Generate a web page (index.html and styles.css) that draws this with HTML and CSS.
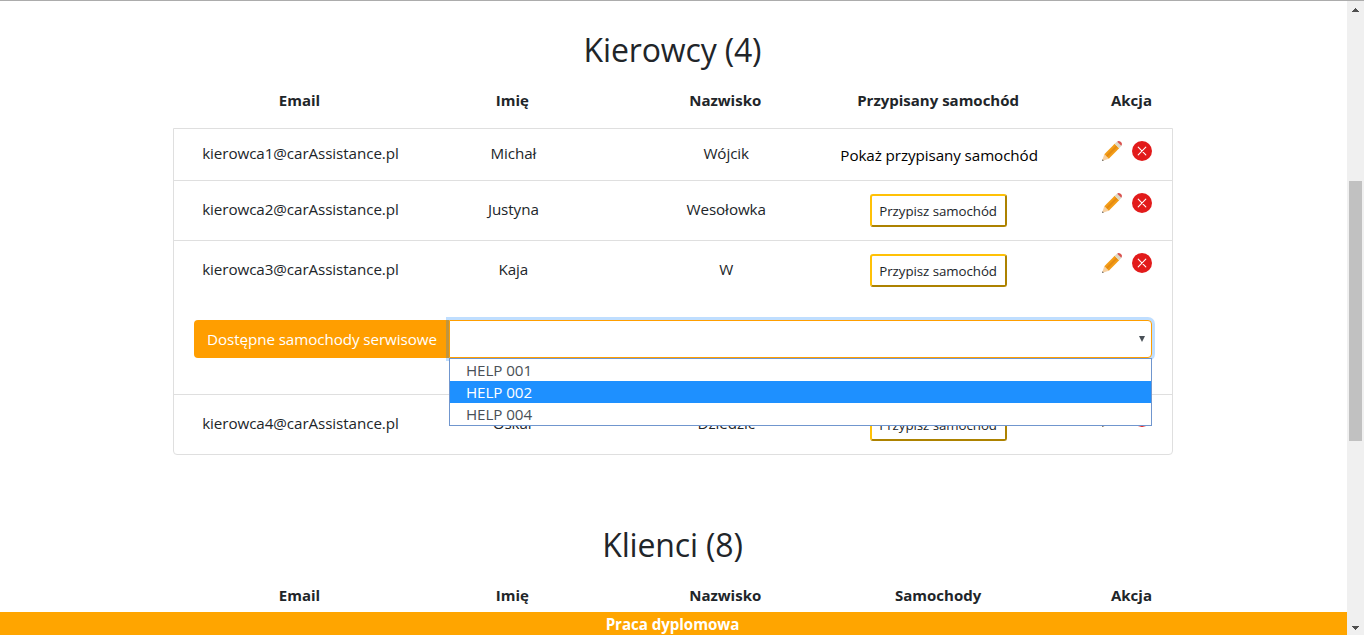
FILE: index.html
```html
<!DOCTYPE html>
<html lang="pl">
<head>
<meta charset="utf-8">
<title>Kierowcy</title>
<link rel="stylesheet" href="styles.css">
</head>
<body>
<svg class="sprite" width="0" height="0">
  <symbol id="pencil" viewBox="0 0 20 20">
    <path fill="#f7d0a0" d="M0 20 2.3 13.2 6.8 17.7z"/>
    <path fill="#555" d="M0 20 .6 18.2 1.8 19.4z"/>
    <path fill="#f39c16" d="M2.3 13.2 12.7 2.8 17.2 7.3 6.8 17.7z"/>
    <path fill="#e38a13" d="M4.2 14.6 14 4.7 15.3 6 5.4 15.9z"/>
    <path fill="#dcd8c5" d="M12.7 2.8 15.2.4 19.6 4.8 17.2 7.3z"/>
    <path fill="#d9534f" d="M15.2.8Q16-.2 17.6.2 19.4.6 19.9 2.4 20.1 3.9 19.3 4.8z"/>
  </symbol>
  <symbol id="remove" viewBox="0 0 20 20">
    <circle cx="10" cy="10" r="10" fill="#e21b1b"/>
    <path d="M6.2 6.2 13.8 13.8M13.8 6.2 6.2 13.8" stroke="#fff" stroke-width="1.1" stroke-linecap="round"/>
  </symbol>
</svg>
<div class="window">
  <div class="page">
    <main class="content">
      <h2 class="title title-drivers">Kierowcy (4)</h2>
      <div class="columns head"><span>Email</span><span>Imię</span><span>Nazwisko</span><span>Przypisany samochód</span><span class="last">Akcja</span></div>
      <ul class="list">
        <li class="item first">
          <div class="columns"><span class="email">kierowca1@carAssistance.pl</span><span>Michał</span><span>Wójcik</span><span class="show">Pokaż przypisany samochód</span><span class="actions"><svg><use href="#pencil"/></svg><svg><use href="#remove"/></svg></span></div>
        </li>
        <li class="item">
          <div class="columns"><span class="email">kierowca2@carAssistance.pl</span><span>Justyna</span><span>Wesołowka</span><span class="cell"><button class="assign">Przypisz samochód</button></span><span class="actions"><svg><use href="#pencil"/></svg><svg><use href="#remove"/></svg></span></div>
        </li>
        <li class="item open">
          <div class="columns"><span class="email">kierowca3@carAssistance.pl</span><span>Kaja</span><span>W</span><span class="cell"><button class="assign">Przypisz samochód</button></span><span class="actions"><svg><use href="#pencil"/></svg><svg><use href="#remove"/></svg></span></div>
          <div class="picker">
            <span class="label">Dostępne samochody serwisowe</span>
            <div class="select">
              <svg class="arrow" viewBox="0 0 6 6"><path d="M0 0h6L3 6z"/></svg>
              <div class="options"><div>HELP 001</div><div class="active">HELP 002</div><div>HELP 004</div></div>
            </div>
          </div>
        </li>
        <li class="item">
          <div class="columns"><span class="email">kierowca4@carAssistance.pl</span><span>Oskar</span><span>Dziedzic</span><span class="cell"><button class="assign">Przypisz samochód</button></span><span class="actions"><svg><use href="#pencil"/></svg><svg><use href="#remove"/></svg></span></div>
        </li>
      </ul>
      <h2 class="title title-clients">Klienci (8)</h2>
      <div class="columns head"><span>Email</span><span>Imię</span><span>Nazwisko</span><span>Samochody</span><span class="last">Akcja</span></div>
    </main>
    <footer class="footer">Praca dyplomowa</footer>
  </div>
  <div class="scrollbar">
    <svg viewBox="0 0 7 4"><path d="M3 0h1v1h1v1h1v1h1v1H0V3h1V2h1V1h1z"/></svg>
    <div class="thumb"></div>
    <svg class="down" viewBox="0 0 7 4"><path d="M0 0h7v1H6v1H5v1H4v1H3V3H2V2H1V1H0z"/></svg>
  </div>
</div>
</body>
</html>
```
FILE: styles.css
```css
* { box-sizing: border-box; }
body {
  margin: 0;
  overflow: hidden;
  background: #fff;
  color: #212529;
  font: 15.2px/24px "Open Sans", "Noto Sans", sans-serif;
  letter-spacing: -.08px;
}
.sprite { display: block; }
.window {
  display: grid;
  grid-template-columns: 1fr 17px;
  height: 635px;
  border-top: 1px solid #acacac;
}
.page {
  display: grid;
  grid-template-rows: 611px 23px;
  min-width: 0;
}
.content { width: 1000px; margin-left: 173px; overflow: hidden; }
.title {
  margin: 0;
  padding-right: 1px;
  text-align: center;
  font-weight: 500;
  font-size: 32px;
  line-height: 38px;
  letter-spacing: -.15px;
}
.title-drivers { padding-top: 30px; }
.title-clients { padding-top: 71px; }
.columns {
  display: grid;
  grid-template-columns: 2fr 2fr 2fr 2fr 1fr;
  text-align: center;
}
.columns > span { white-space: nowrap; }
.head { padding: 19px 22px 16px 20px; font-weight: 700; font-size: 15px; letter-spacing: 0; }
.head .last { text-align: right; margin-right: -1px; }
.list {
  margin: 0;
  padding: 0;
  list-style: none;
  border: 1px solid #dfdfdf;
  border-radius: 0 0 4px 4px;
}
.item { height: 60px; padding: 12px 20px; border-top: 1px solid #dfdfdf; }
.item .columns > span { padding-top: 4px; }
.item.first { height: 51px; border-top: 0; }
.item.first .columns > span { padding-top: 0; }
.item.first .columns > .show { padding-top: 2px; color: #000; }
.item.open { height: 154px; }
.item .columns > .cell { display: flex; justify-content: center; align-items: flex-start; padding: 1px 2px 0 0; }
.assign {
  width: 137px;
  height: 33px;
  padding: 1px 0 0;
  border: 2px solid;
  border-color: #ffc107 #ad8200 #ad8200 #ffc107;
  border-radius: 3px;
  background: #fff;
  color: #212529;
  font: 13.3px/21px "Open Sans", sans-serif;
  letter-spacing: -.05px;
}
.item .columns > .actions { display: flex; justify-content: flex-end; gap: 10px; padding-top: 0; }
.actions svg { width: 20px; height: 20px; }
.picker { display: flex; height: 38px; margin-top: 33px; }
.label {
  width: 255px;
  padding: 7px 0 7px 13px;
  border-radius: 4px 0 0 4px;
  background: #ff9e00;
  color: #fff;
  white-space: nowrap;
}
.select {
  position: relative;
  flex: 1;
  border: 1px solid #ff9e00;
  border-radius: 0 4px 4px 0;
  background: #fff;
  box-shadow: 0 0 0 3px rgba(0, 123, 255, .25);
}
.select .arrow { position: absolute; right: 6px; top: 15px; width: 6px; height: 6px; fill: #495057; }
.options {
  position: absolute;
  z-index: 2;
  top: 37px;
  left: -1px;
  right: -1px;
  border: 1px solid #7096ce;
  background: #fff;
  color: #495057;
  line-height: 22px;
}
.options div { padding-left: 16px; }
.options .active { background: #1e90ff; color: #fff; }
.footer {
  padding-right: 2px;
  background: #ffa500;
  color: #fff;
  font-weight: 700;
  text-align: center;
  overflow: hidden;
}
.scrollbar {
  display: flex;
  flex-direction: column;
  align-items: center;
  padding: 7px 0 5px;
  background: #f0f0f0;
}
.scrollbar svg { width: 7px; height: 4px; fill: #505050; shape-rendering: crispEdges; }
.thumb { width: 13px; height: 260px; margin-top: 169px; background: #c1c1c1; }
.scrollbar .down { margin-top: auto; }
```
